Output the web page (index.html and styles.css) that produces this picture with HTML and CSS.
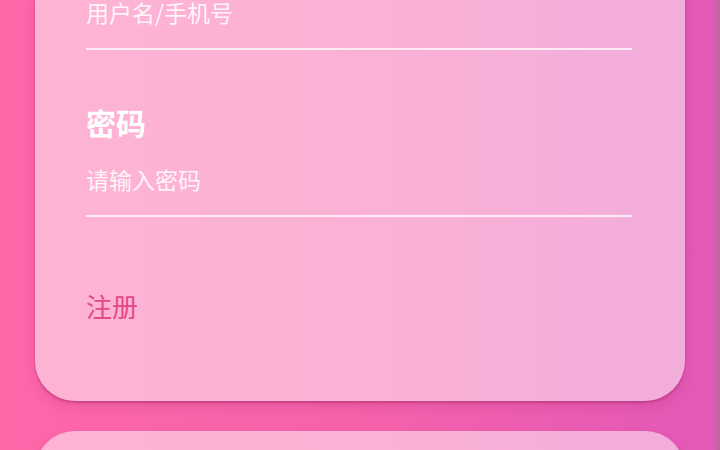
FILE: index.html
```html
<!DOCTYPE html>
<html lang="zh-CN">
<head>
<meta charset="utf-8">
<title>登录</title>
<link rel="stylesheet" href="styles.css">
</head>
<body>
<main class="page">
  <section class="card login-card">
    <form class="form">
      <div class="group">
        <input class="field" id="user" type="text" aria-label="账号" placeholder="用户名/手机号">
      </div>
      <div class="group">
        <label class="label" for="pwd">密码</label>
        <input class="field" id="pwd" type="password" placeholder="请输入密码">
      </div>
      <a class="link" href="#">注册</a>
    </form>
  </section>
  <section class="card next-card"></section>
</main>
</body>
</html>
```
FILE: styles.css
```css
html, body {
  margin: 0;
  padding: 0;
  height: 100%;
  overflow: hidden;
}
body {
  font-family: "Noto Sans CJK SC", "Noto Sans", sans-serif;
  background:
    linear-gradient(to right, rgba(150, 110, 140, 0) calc(100% - 8px), rgba(170, 110, 150, 0.85) 100%),
    linear-gradient(to right, #fe68a9 0%, #f663ab 50%, #e259b8 100%);
}
.page {
  display: flex;
  flex-direction: column;
  gap: 30px;
  padding: 0 35px;
  margin-top: -40px;
}
.card {
  background: rgba(255, 255, 255, 0.5);
  border-radius: 40px;
  box-shadow: 0 2px 2px rgba(160, 40, 100, 0.45), 0 6px 14px rgba(160, 30, 100, 0.18);
}
.login-card {
  padding: 40px 53px 77px 51px;
}
.next-card {
  height: 220px;
}
.form {
  display: flex;
  flex-direction: column;
  margin: 0;
}
.group {
  display: flex;
  flex-direction: column;
  gap: 25px;
  margin-bottom: 52px;
}
.group:last-of-type {
  margin-bottom: 0;
}
.label {
  font-size: 30px;
  line-height: 40px;
  font-weight: 700;
  color: #ffffff;
}
.field {
  display: block;
  width: 100%;
  box-sizing: border-box;
  border: none;
  border-bottom: 2px solid rgba(255, 255, 255, 0.75);
  background: transparent;
  outline: none;
  padding: 0 0 24px;
  font-family: "Noto Sans CJK SC", "Noto Sans", sans-serif;
  font-size: 23px;
  line-height: 24px;
  height: 50px;
  color: #ffffff;
}
.field::placeholder {
  color: rgba(255, 255, 255, 0.88);
}
.link {
  margin-top: 71px;
  align-self: flex-start;
  font-size: 26px;
  line-height: 36px;
  color: #e44886;
  text-decoration: none;
}
```
